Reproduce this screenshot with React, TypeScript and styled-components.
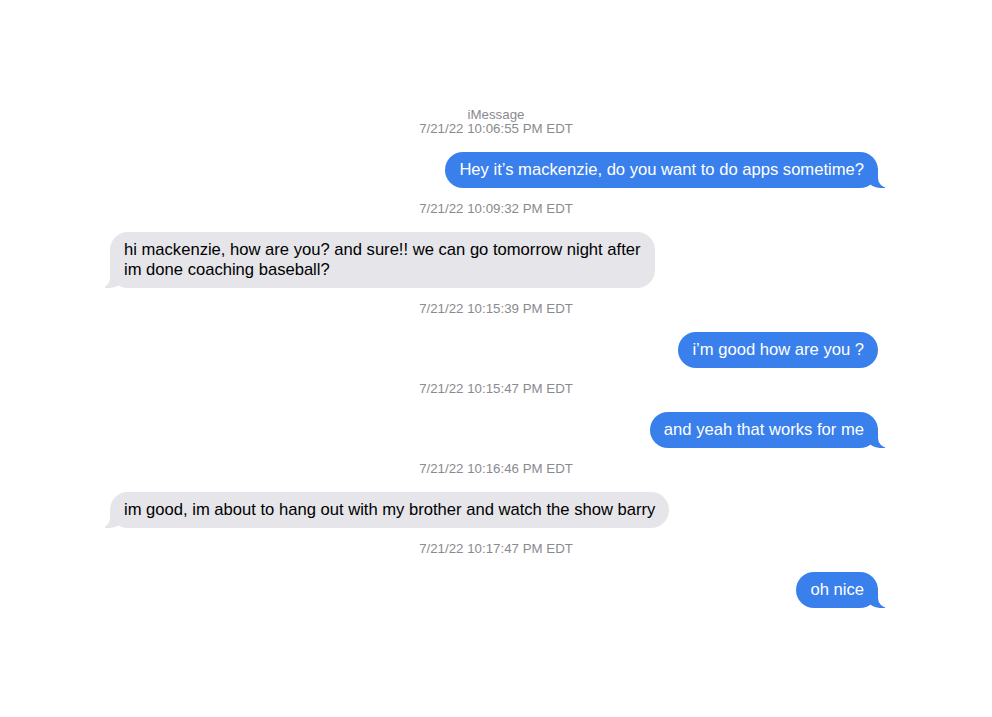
import React from "react";
import styled, { createGlobalStyle, css } from "styled-components";

const GlobalStyle = createGlobalStyle`
  html, body {
    margin: 0;
    padding: 0;
    background: #ffffff;
  }
  body {
    font-family: "Liberation Sans", Arial, sans-serif;
  }
`;

const BLUE = "#3a80ec";
const GRAY = "#e5e5ea";

const Page = styled.div`
  width: 780px;
  margin: 0 auto;
  padding-top: 108px;
  display: flex;
  flex-direction: column;
`;

const Header = styled.div`
  display: flex;
  flex-direction: column;
  align-items: center;
  color: #8a8a8e;
  font-size: 13.3px;
  line-height: 14px;
  margin-bottom: 16px;
`;

const HeaderLine = styled.span`
  display: block;
`;

const Stamp = styled.div`
  text-align: center;
  color: #8a8a8e;
  font-size: 13.3px;
  line-height: 14px;
  margin-top: 1px;
  margin-bottom: 16px;
`;

const Block = styled.div`
  display: flex;
  flex-direction: column;
  margin-bottom: 13px;
`;

const Row = styled.div<{ $sent: boolean }>`
  display: flex;
  justify-content: ${(p) => (p.$sent ? "flex-end" : "flex-start")};
  padding: ${(p) => (p.$sent ? "0 8px 0 0" : "0 0 0 4px")};
`;

const sentTail = css`
  &::before {
    content: "";
    position: absolute;
    bottom: 0;
    right: -7px;
    width: 20px;
    height: 20px;
    background: ${BLUE};
    border-bottom-left-radius: 15px;
  }
  &::after {
    content: "";
    position: absolute;
    bottom: 0;
    right: -26px;
    width: 26px;
    height: 20px;
    background: #ffffff;
    border-bottom-left-radius: 10px;
  }
`;

const receivedTail = css`
  &::before {
    content: "";
    position: absolute;
    bottom: 0;
    left: -5px;
    width: 20px;
    height: 20px;
    background: ${GRAY};
    border-bottom-right-radius: 15px;
  }
  &::after {
    content: "";
    position: absolute;
    bottom: 0;
    left: -26px;
    width: 26px;
    height: 20px;
    background: #ffffff;
    border-bottom-right-radius: 10px;
  }
`;

const Bubble = styled.div<{ $sent: boolean; $tail: boolean }>`
  position: relative;
  box-sizing: border-box;
  padding: 8px 14px 8px 14px;
  border-radius: 18px;
  font-size: 16.6px;
  line-height: 20px;
  white-space: nowrap;
  background: ${(p) => (p.$sent ? BLUE : GRAY)};
  color: ${(p) => (p.$sent ? "#ffffff" : "#000000")};
  ${(p) => (p.$tail ? (p.$sent ? sentTail : receivedTail) : "")}
`;

const Line = styled.span`
  position: relative;
  z-index: 1;
  display: block;
`;

type Msg = { time: string; lines: string[]; sent: boolean; tail: boolean };

const messages: Msg[] = [
  { time: "7/21/22 10:06:55 PM EDT", lines: ["Hey it\u2019s mackenzie, do you want to do apps sometime?"], sent: true, tail: true },
  {
    time: "7/21/22 10:09:32 PM EDT",
    lines: ["hi mackenzie, how are you? and sure!! we can go tomorrow night after", "im done coaching baseball?"],
    sent: false,
    tail: true,
  },
  { time: "7/21/22 10:15:39 PM EDT", lines: ["i\u2019m good how are you ?"], sent: true, tail: false },
  { time: "7/21/22 10:15:47 PM EDT", lines: ["and yeah that works for me"], sent: true, tail: true },
  { time: "7/21/22 10:16:46 PM EDT", lines: ["im good, im about to hang out with my brother and watch the show barry"], sent: false, tail: true },
  { time: "7/21/22 10:17:47 PM EDT", lines: ["oh nice"], sent: true, tail: true },
];

export default function App() {
  return (
    <>
      <GlobalStyle />
      <Page>
        {messages.map((m, i) => (
          <Block key={i}>
            {i === 0 ? (
              <Header>
                <HeaderLine>iMessage</HeaderLine>
                <HeaderLine>{m.time}</HeaderLine>
              </Header>
            ) : (
              <Stamp>{m.time}</Stamp>
            )}
            <Row $sent={m.sent}>
              <Bubble $sent={m.sent} $tail={m.tail}>
                {m.lines.map((l, j) => (
                  <Line key={j}>{l}</Line>
                ))}
              </Bubble>
            </Row>
          </Block>
        ))}
      </Page>
    </>
  );
}
